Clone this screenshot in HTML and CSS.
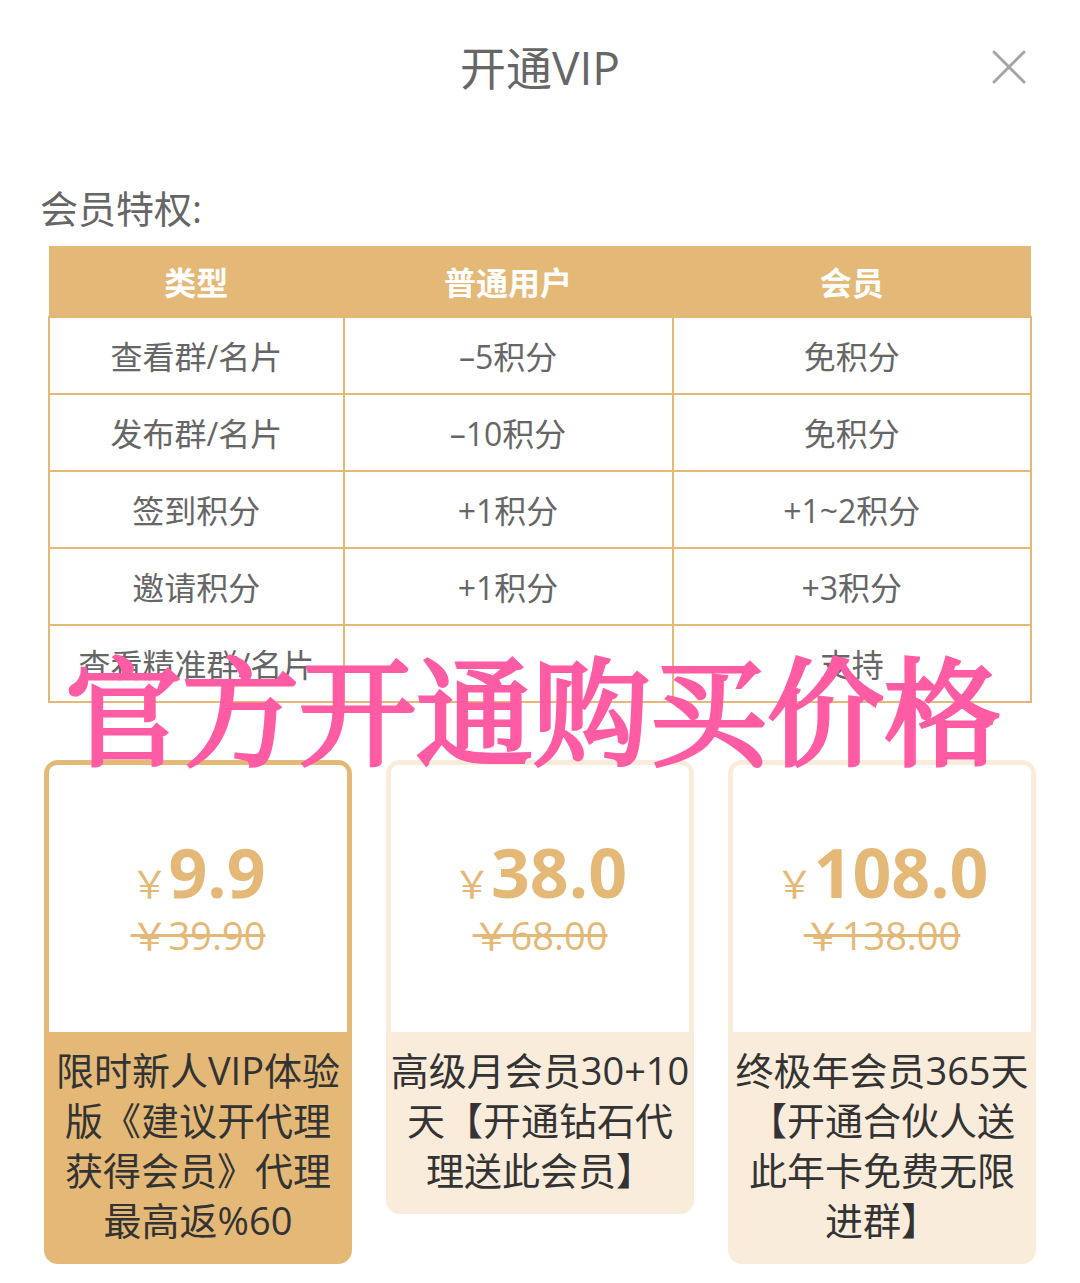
FILE: index.html
```html
<!DOCTYPE html>
<html lang="zh-CN">
<head>
<meta charset="utf-8">
<meta name="viewport" content="width=device-width, initial-scale=1">
<title>开通VIP</title>
<link rel="stylesheet" href="styles.css">
</head>
<body>
<main class="page">
  <header class="top">
    <h1 class="title">开通VIP</h1>
    <button class="close" type="button" aria-label="关闭">
      <svg viewBox="0 0 34 34" width="34" height="34" fill="none" stroke="#a5a5a5" stroke-width="3" stroke-linecap="round"><path d="M2 2l30 30M32 2L2 32"/></svg>
    </button>
  </header>
  <h2 class="subtitle">会员特权:</h2>
  <section class="benefits">
    <table class="table">
      <colgroup><col class="col-type"><col class="col-user"><col class="col-member"></colgroup>
      <thead><tr><th>类型</th><th>普通用户</th><th>会员</th></tr></thead>
      <tbody>
        <tr><td>查看群/名片</td><td>–5积分</td><td>免积分</td></tr>
        <tr><td>发布群/名片</td><td>–10积分</td><td>免积分</td></tr>
        <tr><td>签到积分</td><td>+1积分</td><td>+1~2积分</td></tr>
        <tr><td>邀请积分</td><td>+1积分</td><td>+3积分</td></tr>
        <tr><td>查看精准群/名片</td><td></td><td>支持</td></tr>
      </tbody>
    </table>
    <p class="banner">官方开通购买价格</p>
  </section>
  <section class="plans">
    <button class="plan selected" type="button">
      <span class="offer"><span class="price"><span class="yen">&#xFFE5;</span>9.9</span><s class="was">&#xFFE5;39.90</s></span>
      <span class="name">限时新人VIP体验版《建议开代理获得会员》代理最高返%60</span>
    </button>
    <button class="plan" type="button">
      <span class="offer"><span class="price"><span class="yen">&#xFFE5;</span>38.0</span><s class="was">&#xFFE5;68.00</s></span>
      <span class="name">高级月会员30+10天【开通钻石代理送此会员】</span>
    </button>
    <button class="plan" type="button">
      <span class="offer"><span class="price"><span class="yen">&#xFFE5;</span>108.0</span><s class="was">&#xFFE5;138.00</s></span>
      <span class="name">终极年会员365天【开通合伙人送此年卡免费无限进群】</span>
    </button>
  </section>
</main>
</body>
</html>
```
FILE: styles.css
```css
* { box-sizing: border-box; }
body {
  margin: 0;
  background: #fff;
  color: #666;
  font-family: "Open Sans", "Noto Sans CJK SC", sans-serif;
}
.page { padding: 0 44px 19px; }
.top {
  display: grid;
  grid-template-columns: 1fr auto 1fr;
  align-items: center;
  height: 134px;
}
.title {
  grid-column: 2;
  margin: 0;
  font-size: 46px;
  font-weight: 400;
  line-height: 64px;
}
.close {
  justify-self: end;
  display: flex;
  margin-right: 10px;
  padding: 0;
  border: 0;
  background: none;
}
.subtitle {
  margin: 47px 0 11px -4px;
  font-size: 38px;
  font-weight: 400;
  line-height: 54px;
}
.benefits { position: relative; padding: 0 4px; }
.table {
  width: 100%;
  table-layout: fixed;
  border-collapse: collapse;
  font-size: 32px;
  line-height: 45px;
  text-align: center;
}
.col-type { width: 30%; }
.col-user { width: 33.5%; }
.table th {
  height: 71px;
  padding: 2px 0 0;
  background: #e4b978;
  color: #fff;
}
.table td {
  height: 77px;
  padding: 2px 0 0;
  border: 2px solid #e4b978;
}
.banner {
  position: absolute;
  left: -14px;
  right: 0;
  bottom: -62px;
  margin: 0;
  color: #ff5ca4;
  font-family: "Noto Serif CJK SC", "Noto Sans CJK SC", serif;
  font-size: 117px;
  font-weight: 400;
  line-height: 120px;
  text-align: center;
  white-space: nowrap;
  -webkit-text-stroke: 4px #ff5ca4;
}
.plans {
  display: grid;
  grid-template-columns: repeat(3, 1fr);
  gap: 34px;
  align-items: start;
  margin-top: 57px;
}
.plan {
  display: block;
  padding: 0;
  border: 5px solid #f9ecdb;
  border-radius: 14px;
  background: #f9ecdb;
  color: #333;
  font: inherit;
}
.plan.selected { border-color: #e4b978; background: #e4b978; }
.offer {
  display: flex;
  flex-direction: column;
  gap: 4px;
  align-items: center;
  justify-content: center;
  height: 267px;
  border-radius: 8px 8px 0 0;
  background: #fff;
  color: #e4b978;
}
.price { font-size: 68px; font-weight: 700; line-height: 68px; }
.yen { font-size: 38px; font-weight: 400; line-height: 38px; }
.was { font-size: 38px; line-height: 50px; }
.name {
  display: block;
  margin: 0 -2px;
  padding: 13px 0 14px;
  font-size: 38px;
  line-height: 50px;
}
```
